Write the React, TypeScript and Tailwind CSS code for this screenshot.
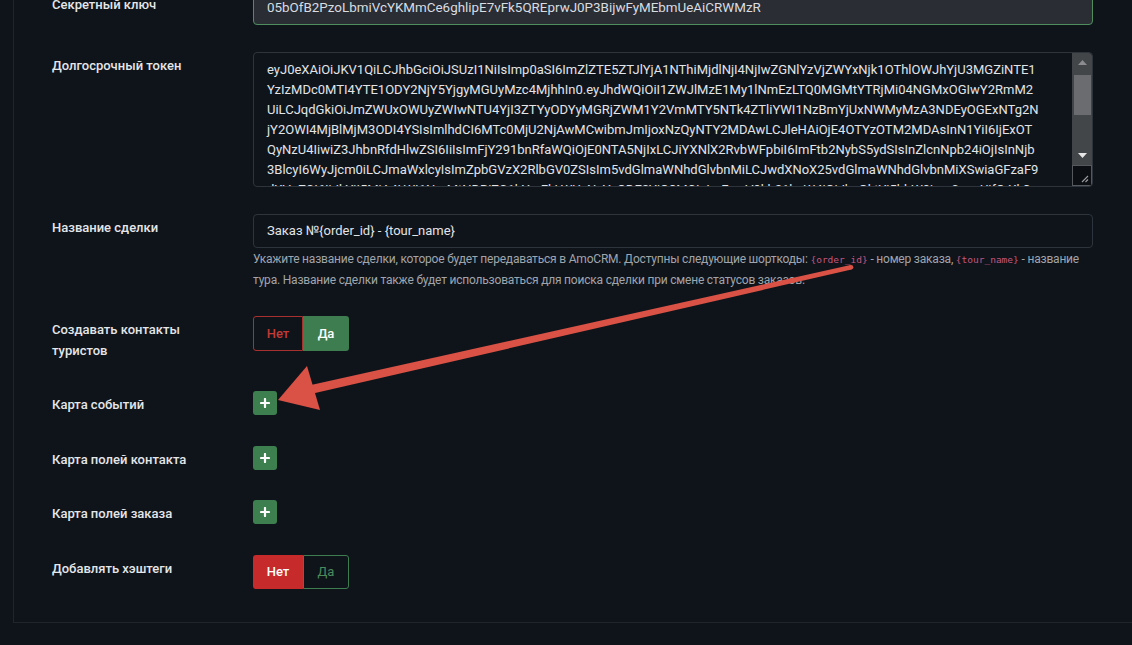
import React from "react";

const tokenLines = [
  "eyJ0eXAiOiJKV1QiLCJhbGciOiJSUzI1NiIsImp0aSI6ImZlZTE5ZTJlYjA1NThiMjdlNjI4NjIwZGNlYzVjZWYxNjk1OThlOWJhYjU3MGZiNTE1",
  "YzIzMDc0MTI4YTE1ODY2NjY5YjgyMGUyMzc4MjhhIn0.eyJhdWQiOiI1ZWJlMzE1My1lNmEzLTQ0MGMtYTRjMi04NGMxOGIwY2RmM2",
  "UiLCJqdGkiOiJmZWUxOWUyZWIwNTU4YjI3ZTYyODYyMGRjZWM1Y2VmMTY5NTk4ZTliYWI1NzBmYjUxNWMyMzA3NDEyOGExNTg2N",
  "jY2OWI4MjBlMjM3ODI4YSIsImlhdCI6MTc0MjU2NjAwMCwibmJmIjoxNzQyNTY2MDAwLCJleHAiOjE4OTYzOTM2MDAsInN1YiI6IjExOT",
  "QyNzU4IiwiZ3JhbnRfdHlwZSI6IiIsImFjY291bnRfaWQiOjE0NTA5NjIxLCJiYXNlX2RvbWFpbiI6ImFtb2NybS5ydSIsInZlcnNpb24iOjIsInNjb",
  "3BlcyI6WyJjcm0iLCJmaWxlcyIsImZpbGVzX2RlbGV0ZSIsIm5vdGlmaWNhdGlvbnMiLCJwdXNoX25vdGlmaWNhdGlvbnMiXSwiaGFzaF9",
  "dXVpZCI6IjJkYjI5MjA4LWI1NmMtNDBiZC1hYmFkLWUzNzYxODE2YjQ3MCIsImFwaV9kb21haW4iOiJhcGktYi5hbW9jcm0ucnUifQ.Xk3",
];

function Label({ children }: { children: React.ReactNode }) {
  return (
    <div className="w-[201px] shrink-0 pt-[3px] text-[13px] leading-[21px] font-medium text-[#e4e6e9]">
      {children}
    </div>
  );
}

function PlusButton() {
  return (
    <div className="w-[24px] h-[24px] rounded-[3px] bg-[#3d7f4f] flex items-center justify-center">
      <svg width="10" height="10" viewBox="0 0 10 10">
        <path d="M5 1v8M1 5h8" stroke="white" strokeWidth="2.2" strokeLinecap="round" />
      </svg>
    </div>
  );
}

function Code({ children }: { children: React.ReactNode }) {
  return (
    <span className="text-[9.5px] tracking-normal text-[#c5567f]" style={{ fontFamily: '"DejaVu Sans Mono", monospace' }}>
      {children}
    </span>
  );
}

export default function App() {
  return (
    <div
      className="relative w-[1132px] h-[645px] overflow-hidden bg-[#0f141b]"
      style={{ fontFamily: 'Roboto, "Noto Sans", sans-serif' }}
    >
      <div className="ml-[13px] w-[1200px] border-l border-b border-[#1f252c] pl-[38px] pb-[33px]">
        <div className="flex flex-col -mt-[9px]">
          {/* Row 1 */}
          <div className="flex">
            <Label>Секретный ключ</Label>
            <div className="w-[840px] h-[34px] rounded-[4px] border border-[#4f8d5e] bg-[#2a2e34] px-[13px] flex items-center text-[13.4px] text-[#d9dce0]">
              05bOfB2PzoLbmiVcYKMmCe6ghlipE7vFk5QREprwJ0P3BijwFyMEbmUeAiCRWMzR
            </div>
          </div>

          {/* Row 2 */}
          <div className="flex mt-[27px]">
            <Label>Долгосрочный токен</Label>
            <div className="w-[840px] h-[135px] rounded-[4px] border border-[#2e343b] bg-[#0f141b] flex overflow-hidden">
              <div className="flex-1 overflow-hidden pl-[13px] pt-[7px] text-[13px] leading-[20px] text-[#e2e4e7]">
                {tokenLines.map((l, i) => (
                  <div key={i} className="whitespace-nowrap">
                    {l}
                  </div>
                ))}
              </div>
              <div className="w-[20px] shrink-0 flex flex-col">
                <div className="flex-1 bg-[#434649] flex flex-col items-center rounded-tr-[3px]">
                  <div className="h-[17px] flex items-center justify-center pt-[2px]">
                    <svg width="9" height="5" viewBox="0 0 9 5">
                      <path d="M0 5 L4.5 0 L9 5 Z" fill="#8a8c8f" />
                    </svg>
                  </div>
                  <div className="mt-[5px] w-[17px] h-[40px] bg-[#6a6c70]" />
                  <div className="flex-1" />
                  <div className="h-[17px] flex items-center justify-center pb-[3px]">
                    <svg width="9" height="5" viewBox="0 0 9 5">
                      <path d="M0 0 L4.5 5 L9 0 Z" fill="#e6e6e6" />
                    </svg>
                  </div>
                </div>
                <div className="h-[21px] bg-[#0b0e12] border border-[#55585c] flex items-end justify-end p-[2px]">
                  <svg width="8" height="8" viewBox="0 0 8 8">
                    <path d="M1 7 L7 1 M4.5 7 L7 4.5" stroke="#9a9c9f" strokeWidth="1.1" />
                  </svg>
                </div>
              </div>
            </div>
          </div>

          {/* Row 3 */}
          <div className="flex mt-[27px]">
            <Label>Название сделки</Label>
            <div className="w-[840px]">
              <div className="h-[34px] rounded-[4px] border border-[#2e343b] bg-[#0f141b] px-[13px] flex items-center text-[13px] text-[#e2e4e7]">
                Заказ №{"{order_id}"} - {"{tour_name}"}
              </div>
              <div className="mt-[1px] text-[12px] leading-[20px] text-[#a0a5ab] whitespace-nowrap tracking-[-0.2px]">
                Укажите название сделки, которое будет передаваться в AmoCRM. Доступны следующие шорткоды:{" "}
                <Code>{"{order_id}"}</Code> - номер заказа, <Code>{"{tour_name}"}</Code> - название
                <br />
                тура. Название сделки также будет использоваться для поиска сделки при смене статусов заказов.
              </div>
            </div>
          </div>

          {/* Row 4 */}
          <div className="flex mt-[26px]">
            <Label>
              Создавать контакты
              <br />
              туристов
            </Label>
            <div className="flex h-[35px] text-[13px] font-medium">
              <div className="w-[50px] flex items-center justify-center border border-[#a8302f] rounded-l-[3px] text-[#c23a36]">
                Нет
              </div>
              <div className="w-[46px] flex items-center justify-center bg-[#3e7d50] rounded-r-[3px] text-white">
                Да
              </div>
            </div>
          </div>

          {/* Row 5 */}
          <div className="flex mt-[30px]">
            <Label>Карта событий</Label>
            <PlusButton />
          </div>

          {/* Row 6 */}
          <div className="flex mt-[31px]">
            <Label>Карта полей контакта</Label>
            <PlusButton />
          </div>

          {/* Row 7 */}
          <div className="flex mt-[30px]">
            <Label>Карта полей заказа</Label>
            <PlusButton />
          </div>

          {/* Row 8 */}
          <div className="flex mt-[31px]">
            <Label>Добавлять хэштеги</Label>
            <div className="flex h-[34px] text-[13px] font-medium">
              <div className="w-[50px] flex items-center justify-center bg-[#c62a2a] rounded-l-[3px] text-white">
                Нет
              </div>
              <div className="w-[46px] flex items-center justify-center border border-[#3e7d50] rounded-r-[3px] text-[#4b8a5b] font-normal">
                Да
              </div>
            </div>
          </div>
        </div>
      </div>

      {/* Annotation arrow */}
      <svg className="absolute left-0 top-0 pointer-events-none" width="1132" height="645" viewBox="0 0 1132 645">
        <polygon points="850.5,265 851.5,269.5 313,393.5 311,385" fill="#da5245" />
        <circle cx="851" cy="267.2" r="2.3" fill="#da5245" />
        <polygon points="278,400 307,366 320,410" fill="#da5245" />
      </svg>
    </div>
  );
}
